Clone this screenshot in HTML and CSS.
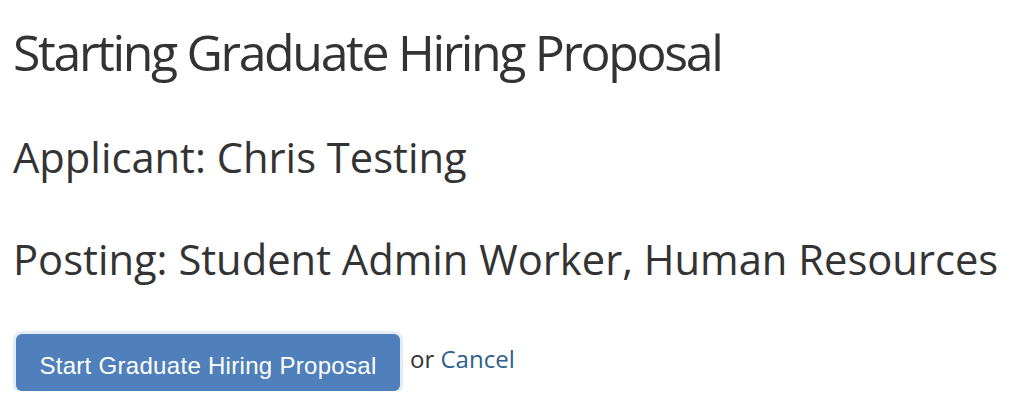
FILE: index.html
```html
<!DOCTYPE html>
<html lang="en">
<head>
    <meta charset="UTF-8">
    <title>Starting Graduate Hiring Proposal</title>
    <link rel="stylesheet" href="styles.css">
</head>
<body>

<div class="container">
    <h1 class="page-title">Starting Graduate Hiring Proposal</h1>
    <h2 class="detail">Applicant: Chris Testing</h2>
    <h2 class="detail">Posting: Student Admin Worker, Human Resources</h2>

    <form class="actions">
        <button type="button" class="btn-primary">Start Graduate Hiring Proposal</button>
        <span class="or-text">or <a href="#" class="cancel-link">Cancel</a></span>
    </form>
</div>

</body>
</html>
```

FILE: styles.css
```css
body {
    margin: 0;
    background-color: #ffffff;
    color: #333333;
    font-family: 'Open Sans', sans-serif;
}

.container {
    padding: 0 13px;
}

.page-title {
    margin: 0;
    padding-top: 21px;
    font-size: 50px;
    font-weight: normal;
    line-height: 62px;
    letter-spacing: -2.35px;
}

.detail {
    margin: 0;
    margin-top: 45px;
    font-size: 41.7px;
    font-weight: normal;
    line-height: 58px;
    white-space: nowrap;
}

.detail + .detail {
    margin-top: 44px;
}

.actions {
    display: flex;
    align-items: flex-start;
    gap: 10px;
    margin-top: 46px;
}

.btn-primary {
    margin-left: 3px;
    width: 384px;
    height: 57px;
    padding: 7px 0 0 0;
    border: none;
    border-radius: 6px;
    background-color: #5080bb;
    box-shadow: 0 0 0 3px #e4ebf5;
    color: #ffffff;
    font-family: 'Liberation Sans', Arial, sans-serif;
    font-size: 24px;
    letter-spacing: 0.3px;
    text-align: center;
    cursor: pointer;
}

.or-text {
    margin-top: 8px;
    font-size: 24px;
    line-height: 34px;
    color: #333333;
}

.cancel-link {
    color: #2d5f8f;
    text-decoration: none;
}
```
